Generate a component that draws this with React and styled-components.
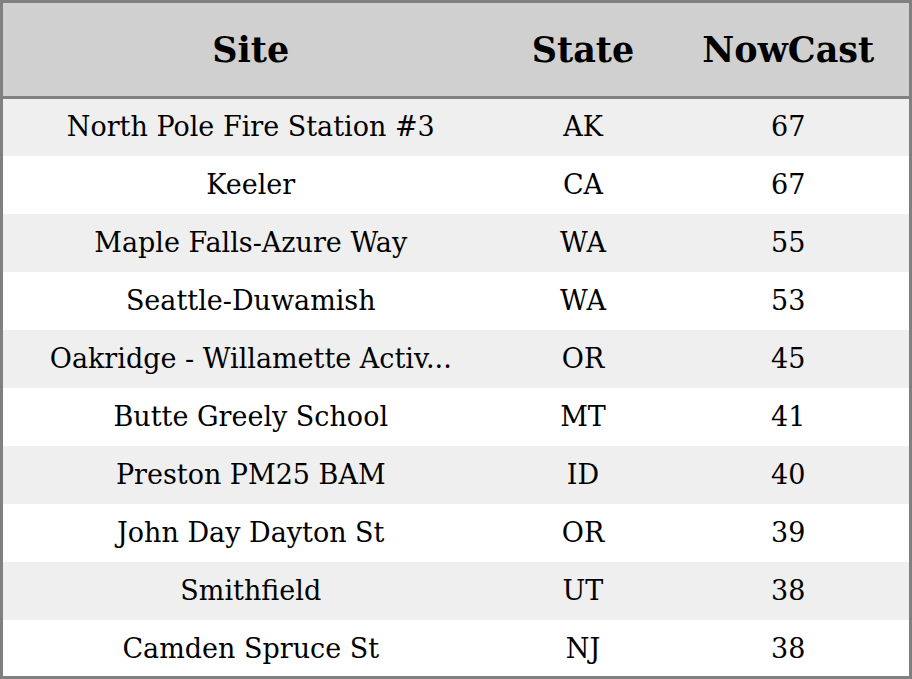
import React from "react";
import styled, { createGlobalStyle } from "styled-components";

const Global = createGlobalStyle`
  html, body { margin: 0; padding: 0; background: #ffffff; }
  body { font-family: "DejaVu Serif", serif; color: #000; }
`;

const Frame = styled.div`
  width: 912px;
  height: 679px;
  box-sizing: border-box;
  border: 3px solid #808080;
  overflow: hidden;
  display: flex;
  flex-direction: column;
`;

const Grid = styled.div`
  display: grid;
  grid-template-columns: 495.5px 169px 241.5px;
  align-items: center;
  justify-items: center;
`;

const Header = styled(Grid)`
  position: relative;
  z-index: 1;
  height: 93px;
  flex: none;
  background: #d0d0d0;
  border-bottom: 3px solid #808080;
`;

const HeadCell = styled.div`
  font-family: "DejaVu Serif", serif;
  font-weight: bold;
  font-size: 35px;
  color: #000;
`;

const Body = styled.div`
  margin-top: -1.5px;
  display: flex;
  flex-direction: column;
`;

const Row = styled(Grid)`
  height: 58px;
  flex: none;
  background: ${(p) => (p.$alt ? "#efefef" : "#ffffff")};
`;

const Cell = styled.div`
  font-family: "DejaVu Serif", serif;
  font-size: 27px;
  color: #000;
  white-space: nowrap;
`;

const rows = [
  ["North Pole Fire Station #3", "AK", "67"],
  ["Keeler", "CA", "67"],
  ["Maple Falls-Azure Way", "WA", "55"],
  ["Seattle-Duwamish", "WA", "53"],
  ["Oakridge - Willamette Activ...", "OR", "45"],
  ["Butte Greely School", "MT", "41"],
  ["Preston PM25 BAM", "ID", "40"],
  ["John Day Dayton St", "OR", "39"],
  ["Smithfield", "UT", "38"],
  ["Camden Spruce St", "NJ", "38"],
];

export default function App() {
  return (
    <>
      <Global />
      <Frame>
        <Header>
          <HeadCell>Site</HeadCell>
          <HeadCell>State</HeadCell>
          <HeadCell>NowCast</HeadCell>
        </Header>
        <Body>
          {rows.map((r, i) => (
            <Row key={i} $alt={i % 2 === 0}>
              <Cell>{r[0]}</Cell>
              <Cell>{r[1]}</Cell>
              <Cell>{r[2]}</Cell>
            </Row>
          ))}
        </Body>
      </Frame>
    </>
  );
}
